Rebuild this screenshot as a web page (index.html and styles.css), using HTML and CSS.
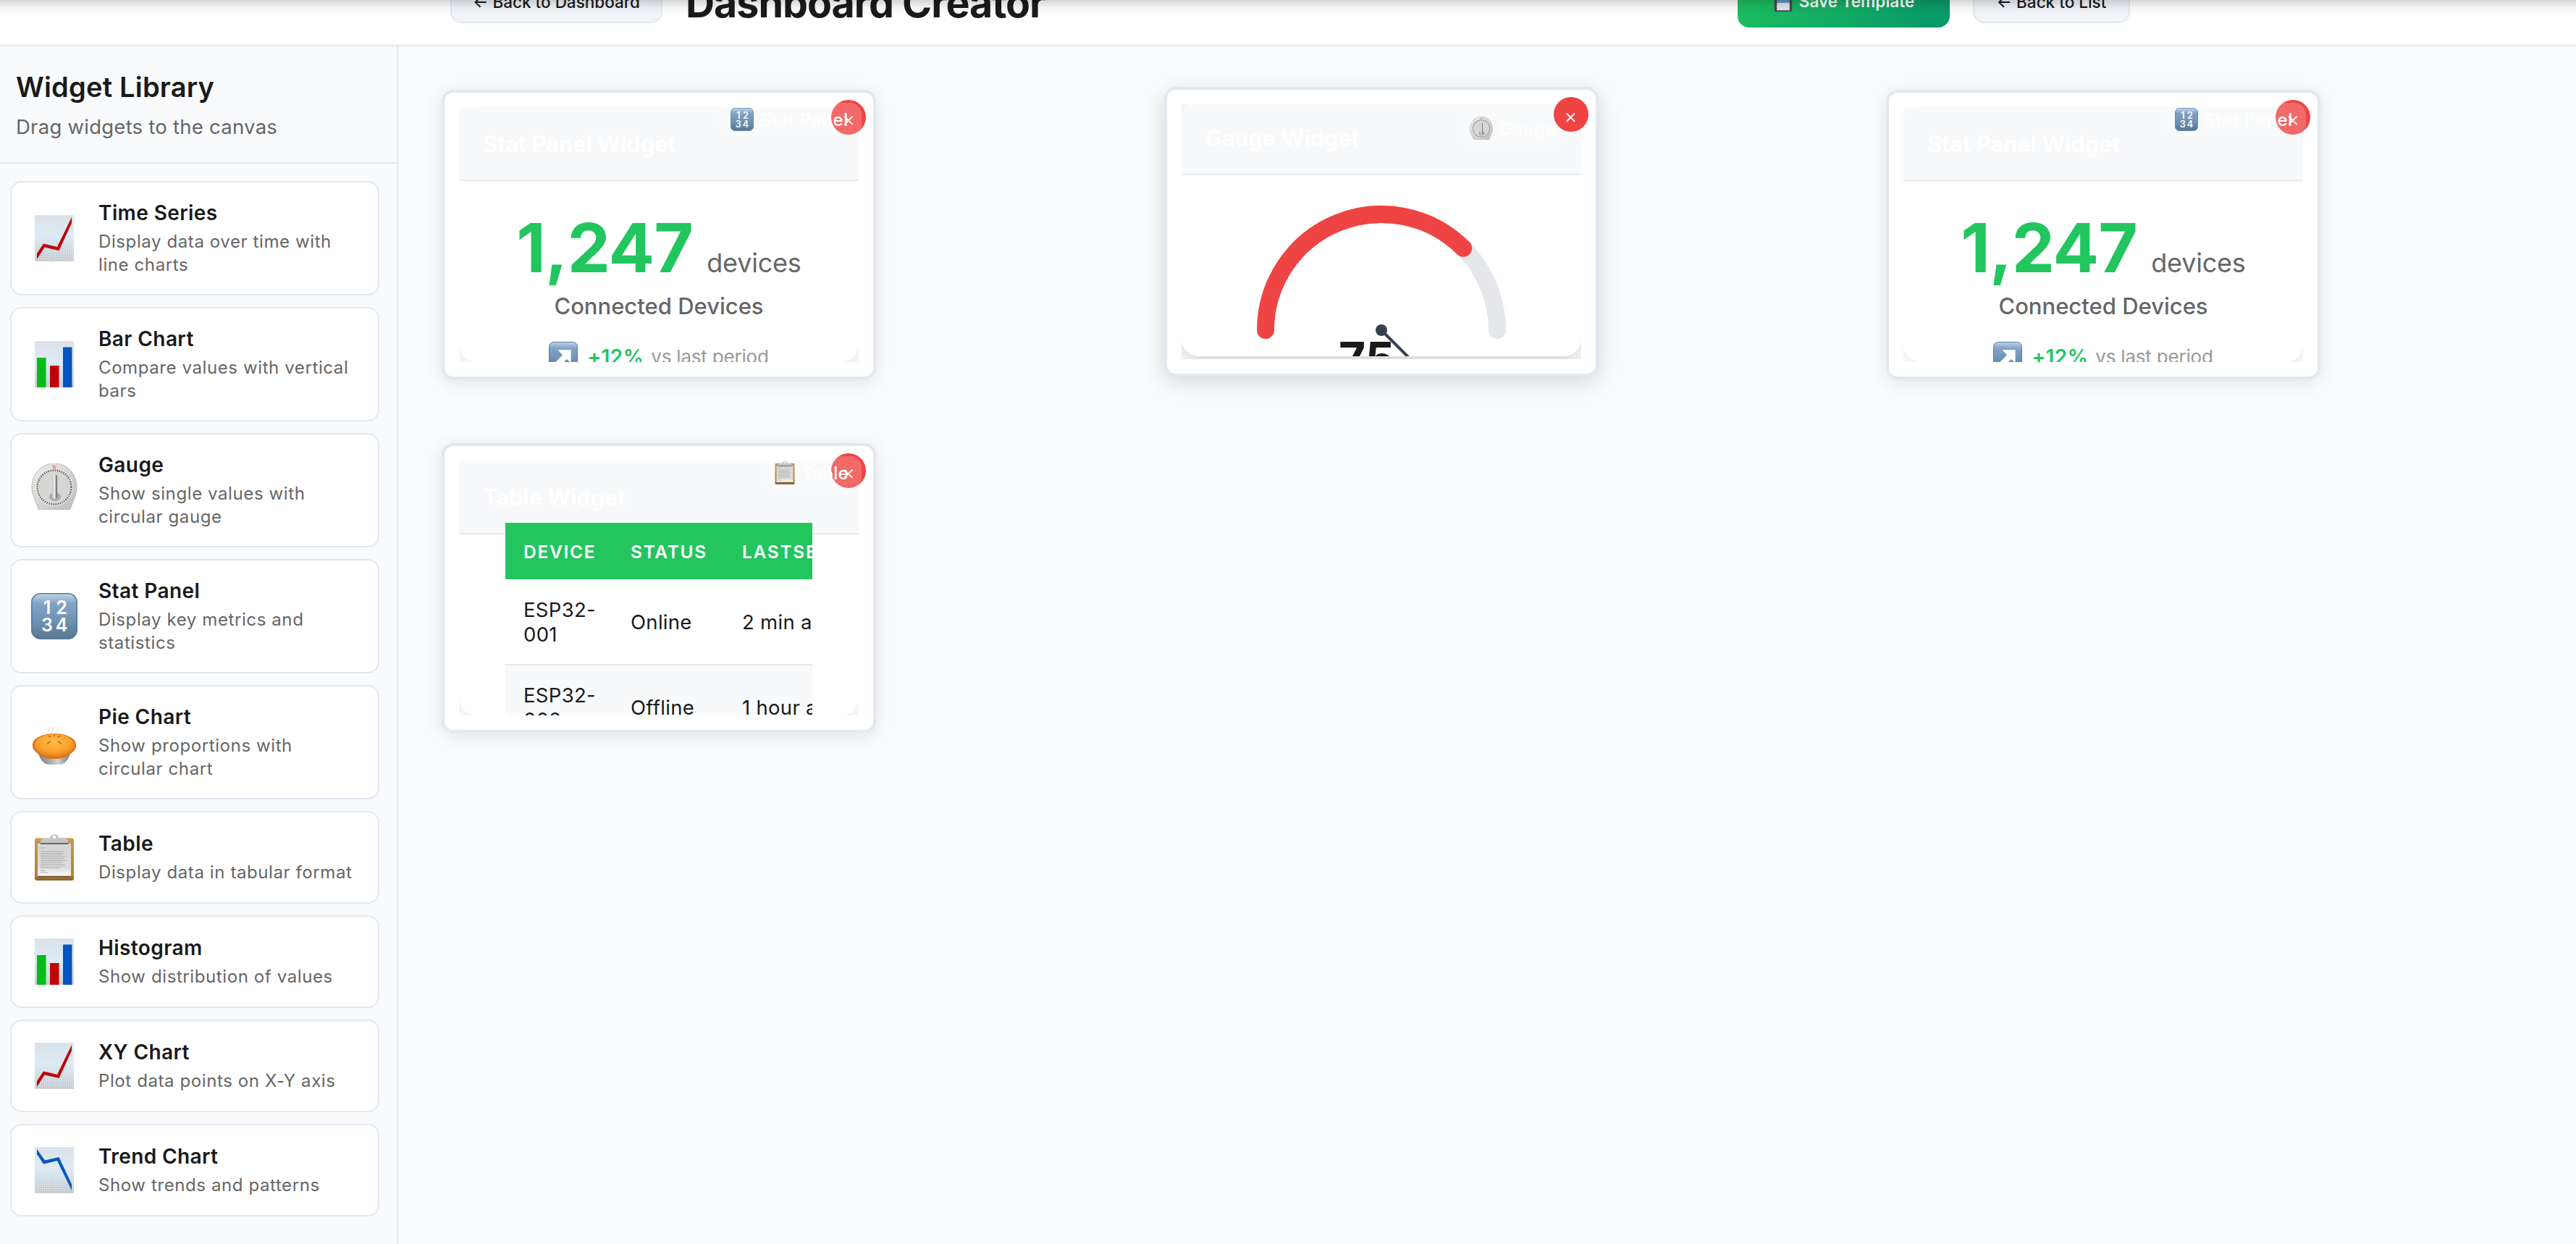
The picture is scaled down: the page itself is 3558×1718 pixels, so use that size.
FILE: index.html
```html
<!DOCTYPE html>
<html lang="en">
<head>
<meta charset="utf-8">
<title>Dashboard Creator</title>
<link rel="stylesheet" href="styles.css">
</head>
<body>
<svg class="sprite" aria-hidden="true">
  <defs>
    <linearGradient id="paper" x1="0" y1="0" x2="0" y2="1"><stop offset="0" stop-color="#d3dde6"/><stop offset=".45" stop-color="#d8e8f5"/><stop offset="1" stop-color="#bcc4cb"/></linearGradient>
    <pattern id="mesh" width="3" height="3" patternUnits="userSpaceOnUse"><path d="M0 .5H3M.5 0V3" stroke="#f2f4f4" stroke-width=".8" opacity=".5"/></pattern>
    <linearGradient id="key" x1="0" y1="0" x2="0" y2="1"><stop offset="0" stop-color="#c3d5e4"/><stop offset=".22" stop-color="#82a3c6"/><stop offset=".6" stop-color="#6f92b4"/><stop offset="1" stop-color="#5b7690"/></linearGradient>
    <linearGradient id="steel" x1="0" y1="0" x2="1" y2="0"><stop offset="0" stop-color="#7b8085"/><stop offset=".35" stop-color="#a3a6a9"/><stop offset=".6" stop-color="#d2d3d4"/><stop offset="1" stop-color="#6e7276"/></linearGradient>
    <radialGradient id="crust" cx=".5" cy=".35" r=".65"><stop offset="0" stop-color="#ffbd4a"/><stop offset=".65" stop-color="#fba02b"/><stop offset="1" stop-color="#e07a18"/></radialGradient>
    <linearGradient id="body" x1="0" y1="0" x2="1" y2="1"><stop offset="0" stop-color="#eeeeed"/><stop offset="1" stop-color="#bdbdbb"/></linearGradient>
    <linearGradient id="knob" x1="0" y1="0" x2="1" y2="0"><stop offset="0" stop-color="#bdbdbb"/><stop offset=".45" stop-color="#f4f4f4"/><stop offset="1" stop-color="#555"/></linearGradient>
    <linearGradient id="wood" x1="0" y1="0" x2="0" y2="1"><stop offset="0" stop-color="#c4995a"/><stop offset=".88" stop-color="#b1823f"/><stop offset="1" stop-color="#8a5f2c"/></linearGradient>
    <linearGradient id="sheet" x1="0" y1="0" x2="0" y2="1"><stop offset="0" stop-color="#d4d4d4"/><stop offset=".75" stop-color="#dedede"/><stop offset="1" stop-color="#fafafa"/></linearGradient>
  </defs>
  <symbol id="i-up" viewBox="0 0 64 64">
    <path d="M5 0H59V64H5Z" fill="url(#paper)"/><path d="M5 0H59V64H5Z" fill="url(#mesh)"/>
    <path d="M8 53 17 39.500 36 44 56 3V11L38.500 49 18.500 44.500 8 61Z" fill="#c00404"/>
  </symbol>
  <symbol id="i-down" viewBox="0 0 64 64">
    <path d="M5 0H59V64H5Z" fill="url(#paper)"/><path d="M5 0H59V64H5Z" fill="url(#mesh)"/>
    <path d="M8 3 19 18.500 38.500 14 56 51.500V60L36 19 17 23.500 8 10Z" fill="#0458c2"/>
  </symbol>
  <symbol id="i-bars" viewBox="0 0 64 64">
    <path d="M5 0H59V64H5Z" fill="url(#paper)"/><path d="M5 0H59V64H5Z" fill="url(#mesh)"/>
    <path d="M8 23H20.500V64H8Z" fill="#05bc18"/><path d="M26 34H38.500V64H26Z" fill="#c00404"/><path d="M44 8.500H56.500V64H44Z" fill="#0456be"/>
  </symbol>
  <symbol id="i-timer" viewBox="0 0 64 64">
    <path d="M32 0C50 0 63 15 63 33 63 44 57 53 54.500 62Q54 64 52 64H12Q10 64 9.500 62C7 53 1 44 1 33 1 15 14 0 32 0Z" fill="url(#body)" stroke="#aaa" stroke-width=".8"/>
    <circle cx="32" cy="33" r="25.500" fill="#d6d6d4" stroke="#ededec"/>
    <circle cx="32" cy="33" r="23.500" fill="none" stroke="#333" stroke-width="2.400" stroke-dasharray="1 2.080"/>
    <path d="M29.500 3.500H34.500L32 8Z" fill="#eba9a9" stroke="#c87878" stroke-width=".6"/>
    <ellipse cx="33" cy="46" rx="8" ry="6" fill="#999" opacity=".7"/>
    <rect x="29" y="15" width="7" height="34" rx="3.500" fill="url(#knob)"/>
  </symbol>
  <symbol id="i-key" viewBox="0 0 64 64">
    <rect x=".8" y=".8" width="62.400" height="62.400" rx="12" fill="url(#key)" stroke="#557a9d" stroke-width="1.600"/>
    <g class="key-digits"><text x="22" y="29">1</text><text x="42" y="29">2</text><text x="22" y="53">3</text><text x="42" y="53">4</text></g>
  </symbol>
  <symbol id="i-arrow" viewBox="0 0 64 64">
    <rect x=".8" y=".8" width="62.400" height="62.400" rx="10" fill="url(#key)" stroke="#557a9d" stroke-width="1.600"/>
    <path d="M20 18H49V47L40 38.500 22 56 13 47 30.500 29Z" fill="#fff"/>
  </symbol>
  <symbol id="i-pie" viewBox="0 0 64 64">
    <path d="M25 17q-3-3 1-5m4 6q-3-4 2-6m4 6q-1-3 2-4" fill="none" stroke="#e6e6e6" stroke-width="2"/>
    <path d="M8 40Q12 60 22 62.500 32 64 42 62.500 52 60 56 40Z" fill="url(#steel)"/>
    <path d="M2 36C1 28 14 20 32 20S63 28 62 36C63 42 57 46 53 49 46 54 40 55 32 55S17 54 11 49C7 46 1 42 2 36Z" fill="#dc7315"/>
    <ellipse cx="32" cy="36.500" rx="27.500" ry="16" fill="url(#crust)"/>
    <path d="M22 34.500 27 31M42 34.500 37 31M23.500 23 27 25M40.500 23 37 25M32 21V24" stroke="#a9560c" stroke-width="1.200"/>
  </symbol>
  <symbol id="i-clip" viewBox="0 0 64 64">
    <rect x="5" y="5.500" width="54" height="58.500" rx="3" fill="url(#wood)"/>
    <path d="M9 13H55V58H9Z" fill="url(#sheet)"/>
    <path d="M9 58.500H55" stroke="#6e4a20" stroke-width="1.600"/>
    <path d="M13 13V10Q13 6 18 6H25Q27 0 32 0T39 6H46Q51 6 51 10V13Z" fill="#c3c7cc"/>
    <path d="M13 13H51" stroke="#6c6560" stroke-width="1.800"/><circle cx="32" cy="4" r="2.200" fill="#fff"/>
    <path d="M13 19H20M13 24H45M13 26.500H46M13 29H44M13 31.500H47M13 34H46M13 36.500H48M13 39H44M13 41.500H47M13 44H47M13 46.500H39M13 50.500H19M13 53H24" stroke="#aaa" stroke-width=".9"/>
  </symbol>
  <symbol id="i-floppy" viewBox="0 0 32 32">
    <rect width="28" height="32" x="2" fill="#44484d"/><path d="M6 13H26V18H6Z" fill="#5b93d0"/><path d="M6 18H26V30H6Z" fill="#e6e6e8"/>
  </symbol>
</svg>

<header class="topbar">
  <div class="topbar-left">
    <button class="btn">← Back to Dashboard</button>
    <h1 class="page-title">Dashboard Creator</h1>
  </div>
  <div class="topbar-right">
    <button class="btn btn-save"><svg class="save-icon"><use href="#i-floppy"/></svg>Save Template</button>
    <button class="btn btn-list">← Back to List</button>
  </div>
</header>

<main class="layout">
  <aside class="sidebar">
    <div class="sidebar-head">
      <h2 class="sidebar-title">Widget Library</h2>
      <p class="sidebar-sub">Drag widgets to the canvas</p>
    </div>
    <div class="library">
      <div class="item"><svg class="item-icon"><use href="#i-up"/></svg><div class="item-text"><h3 class="item-name">Time Series</h3><p class="item-desc">Display data over time with<br>line charts</p></div></div>
      <div class="item"><svg class="item-icon"><use href="#i-bars"/></svg><div class="item-text"><h3 class="item-name">Bar Chart</h3><p class="item-desc">Compare values with vertical<br>bars</p></div></div>
      <div class="item"><svg class="item-icon item-icon-raised"><use href="#i-timer"/></svg><div class="item-text"><h3 class="item-name">Gauge</h3><p class="item-desc">Show single values with<br>circular gauge</p></div></div>
      <div class="item"><svg class="item-icon"><use href="#i-key"/></svg><div class="item-text"><h3 class="item-name">Stat Panel</h3><p class="item-desc">Display key metrics and<br>statistics</p></div></div>
      <div class="item"><svg class="item-icon"><use href="#i-pie"/></svg><div class="item-text"><h3 class="item-name">Pie Chart</h3><p class="item-desc">Show proportions with<br>circular chart</p></div></div>
      <div class="item"><svg class="item-icon"><use href="#i-clip"/></svg><div class="item-text"><h3 class="item-name">Table</h3><p class="item-desc">Display data in tabular format</p></div></div>
      <div class="item"><svg class="item-icon"><use href="#i-bars"/></svg><div class="item-text"><h3 class="item-name">Histogram</h3><p class="item-desc">Show distribution of values</p></div></div>
      <div class="item"><svg class="item-icon"><use href="#i-up"/></svg><div class="item-text"><h3 class="item-name">XY Chart</h3><p class="item-desc">Plot data points on X-Y axis</p></div></div>
      <div class="item"><svg class="item-icon"><use href="#i-down"/></svg><div class="item-text"><h3 class="item-name">Trend Chart</h3><p class="item-desc">Show trends and patterns</p></div></div>
    </div>
  </aside>

  <section class="canvas">
    <article class="widget">
      <div class="clip"><div class="panel">
        <div class="panel-head">Stat Panel Widget</div>
        <div class="stat">
          <div class="stat-value">1,247<span class="stat-unit">devices</span></div>
          <div class="stat-label">Connected Devices</div>
          <div class="stat-trend"><svg class="trend-icon"><use href="#i-arrow"/></svg><b class="trend-up">+12%</b><span class="trend-note">vs last period</span></div>
        </div>
      </div></div>
      <button class="close">×</button>
      <div class="badge"><svg class="badge-icon"><use href="#i-key"/></svg>Stat Panel</div>
    </article>

    <article class="widget widget-hover">
      <div class="clip"><div class="panel">
        <div class="panel-head">Gauge Widget</div>
        <div class="gauge">
          <svg class="gauge-dial" viewBox="0 0 400 250">
            <path d="M40 200A160 160 0 0 1 360 200" fill="none" stroke="#e5e7eb" stroke-width="24" stroke-linecap="round"/>
            <path d="M40 200A160 160 0 0 1 313.140 86.860" fill="none" stroke="#ef4444" stroke-width="24" stroke-linecap="round"/>
            <text class="gauge-value" x="141" y="263">75</text>
            <path d="M200 200 270 270" stroke="#374151" stroke-width="4"/>
            <circle cx="200" cy="200" r="8" fill="#374151"/>
          </svg>
        </div>
      </div></div>
      <div class="badge"><svg class="badge-icon"><use href="#i-timer"/></svg>Gauge</div>
      <button class="close">×</button>
    </article>

    <article class="widget">
      <div class="clip"><div class="panel">
        <div class="panel-head">Stat Panel Widget</div>
        <div class="stat">
          <div class="stat-value">1,247<span class="stat-unit">devices</span></div>
          <div class="stat-label">Connected Devices</div>
          <div class="stat-trend"><svg class="trend-icon"><use href="#i-arrow"/></svg><b class="trend-up">+12%</b><span class="trend-note">vs last period</span></div>
        </div>
      </div></div>
      <button class="close">×</button>
      <div class="badge"><svg class="badge-icon"><use href="#i-key"/></svg>Stat Panel</div>
    </article>

    <article class="widget">
      <div class="clip"><div class="panel">
        <div class="panel-head">Table Widget</div>
        <div class="table-wrap">
          <table class="table">
            <thead><tr><th class="col-device">Device</th><th class="col-status">Status</th><th>LastSeen</th></tr></thead>
            <tbody>
              <tr><td>ESP32-<br>001</td><td>Online</td><td>2 min ago</td></tr>
              <tr><td>ESP32-<br>002</td><td>Offline</td><td>1 hour ago</td></tr>
            </tbody>
          </table>
        </div>
      </div></div>
      <button class="close">×</button>
      <div class="badge badge-tight"><svg class="badge-icon"><use href="#i-clip"/></svg>Table</div>
    </article>
  </section>
</main>
<div class="top-shade"></div>
</body>
</html>
```
FILE: styles.css
```css
* { box-sizing: border-box; }
body { margin: 0; height: 1718px; overflow: hidden; font-family: Inter, "Liberation Sans", sans-serif; color: #1a1a1a; background: #fafbfd; }
h1, h2, h3, p { margin: 0; }
button { font-family: inherit; }
.sprite { position: absolute; width: 0; height: 0; }
.key-digits { font: 600 25px Inter, sans-serif; fill: #fff; text-anchor: middle; }

.topbar { display: flex; justify-content: space-between; align-items: flex-end; height: 64px; padding: 0 616px 0 622px; background: #fff; border-bottom: 2px solid #e2e8f0; overflow: hidden; }
.topbar-left, .topbar-right { display: flex; align-items: flex-end; }
.btn { width: 293px; height: 72px; margin-bottom: 30px; padding: 14px 0 0; border: 2px solid #e2e8f0; border-radius: 16px; background: #f1f4f9; color: #1a1a1a; font-size: 22.500px; font-weight: 500; line-height: 30px; white-space: nowrap; }
.page-title { margin: 0 0 26px 32px; font-size: 55.500px; font-weight: 700; line-height: 64px; letter-spacing: -1px; white-space: nowrap; }
.btn-save { display: flex; align-items: center; justify-content: center; gap: 8px; height: 84px; margin-bottom: 24px; border: 0; padding-top: 12px; background: linear-gradient(135deg, #22c55e, #059669); color: #fff; font-weight: 600; }
.save-icon { width: 28px; height: 32px; }
.btn-list { width: 217px; margin-left: 32px; }
.top-shade { position: absolute; inset: 0 0 auto; height: 20px; background: linear-gradient(rgba(0,0,0,.16), rgba(0,0,0,.05) 50%, transparent); }

.layout { display: flex; height: 1654px; }
.sidebar { width: 550px; flex: none; border-right: 2px solid #e2e8f0; background: #f9fafc; }
.sidebar-head { height: 162px; padding: 31px 22px 0; border-bottom: 2px solid #e2e8f0; }
.sidebar-title { font-size: 38px; font-weight: 600; line-height: 50px; letter-spacing: .2px; }
.sidebar-sub { margin-top: 12px; font-size: 27.500px; line-height: 36px; letter-spacing: .25px; color: #666; }
.library { display: flex; flex-direction: column; gap: 16px; padding: 24px 24px 0 14px; }
.item { display: flex; align-items: center; gap: 29px; min-height: 128px; padding: 25px 12px 25px 27px; border: 2px solid #e2e8f0; border-radius: 16px; background: #fff; }
.item-icon { width: 64px; height: 64px; flex: none; }
.item-icon-raised { margin-bottom: 10px; }
.item-text { display: flex; flex-direction: column; gap: 6px; margin: -1px 0; }
.item-name { font-size: 28px; font-weight: 600; line-height: 36px; letter-spacing: .4px; }
.item-desc { font-size: 24px; line-height: 32px; letter-spacing: .6px; color: #666; }

.canvas { flex: 1; display: grid; grid-template-columns: repeat(3, 997.500px); grid-auto-rows: 400px; gap: 88px 0; padding: 60px 0 0 60px; }
.widget { position: relative; width: 600px; height: 400px; padding: 20px; border: 4px solid #e2e8f0; border-radius: 16px; background: #fff; box-shadow: 0 4px 24px rgba(0,0,0,.1); }
.widget-hover { transform: translateY(-4px); box-shadow: 0 8px 32px rgba(0,0,0,.15); }
.clip { height: 352px; overflow: hidden; }
.panel { height: 352px; border-radius: 24px; background: #fff; overflow: hidden; box-shadow: 0 8px 32px rgba(0,0,0,.1); }
.widget-hover .panel { transform: translateY(-4px); box-shadow: 0 8px 32px rgba(0,0,0,.2); }
.panel-head { height: 102px; padding: 32px 33px 0; border-bottom: 2px solid #e9eaec; background: #f8f9fb; color: #fff; font-size: 31px; font-weight: 600; line-height: 38px; }
.close { position: absolute; top: 10px; right: 10px; width: 48px; height: 48px; padding: 3px 0 0; border: 0; border-radius: 50%; background: #ef4444; color: #fff; font-size: 28px; font-weight: 300; line-height: 40px; text-align: center; }
.badge { position: absolute; top: 14px; right: 16px; display: flex; align-items: center; gap: 9px; height: 46px; padding: 0 18px; border-radius: 16px; background: rgba(255,255,255,.2); color: #fff; font-size: 24px; font-weight: 500; letter-spacing: .7px; white-space: nowrap; }
.badge-tight { gap: 8px; letter-spacing: .3px; }
.badge-icon { width: 32px; height: 32px; }
.widget-hover .badge { top: 30px; right: 36px; }

.stat { display: flex; flex-direction: column; align-items: center; padding-top: 34px; white-space: nowrap; }
.stat-value { color: #22c55e; font-size: 94px; font-weight: 700; line-height: 116px; letter-spacing: -.8px; }
.stat-unit { margin-left: 19px; color: #666; font-size: 36px; font-weight: 400; line-height: 1; letter-spacing: -.2px; }
.stat-label { margin-top: 4px; color: #666; font-size: 31px; font-weight: 500; line-height: 38px; }
.stat-trend { display: flex; align-items: center; margin-top: 28px; gap: 10px; font-size: 26px; line-height: 40px; }
.trend-icon { width: 40px; height: 40px; margin-right: 3px; }
.trend-up { padding-top: 3px; color: #22c55e; font-size: 28px; font-weight: 600; letter-spacing: .4px; }
.trend-note { padding-top: 3px; color: #999; letter-spacing: -.2px; }

.gauge { display: flex; justify-content: center; padding-top: 14px; }
.gauge-dial { width: 400px; height: 250px; overflow: visible; flex: none; }
.gauge-value { font-size: 64px; font-weight: 700; fill: #1a1a1a; }

.table-wrap { position: relative; width: 424px; margin: -16px auto 0; overflow: hidden; }
.table { width: 520px; border-collapse: collapse; table-layout: fixed; font-size: 27.500px; line-height: 34px; letter-spacing: .3px; white-space: nowrap; }
.table th { height: 78px; padding: 2px 0 0 25px; background: #22c55e; color: #fff; font-size: 24.500px; font-weight: 600; letter-spacing: 1.700px; text-align: left; text-transform: uppercase; }
.table td { height: 118px; padding: 0 0 0 25px; border-bottom: 2px solid #e9eaec; }
.table tbody tr:nth-child(2) { background: #f8f9fb; }
.col-device { width: 148px; }
.col-status { width: 154px; }
```
